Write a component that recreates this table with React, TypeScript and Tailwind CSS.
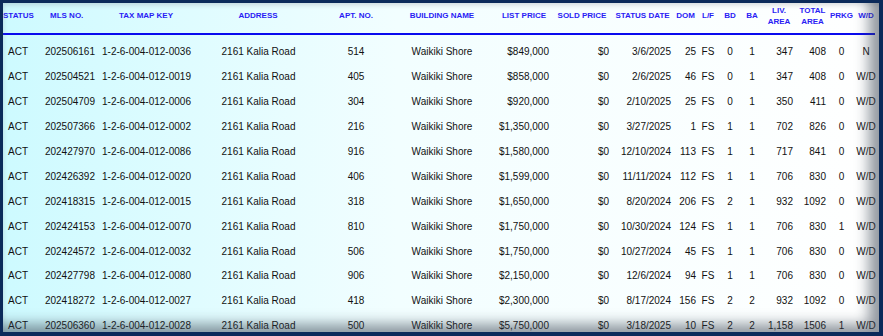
import React from "react";

type Col = {
  key: string;
  label: string[];
  head: string;
  cell: string;
};

const columns: Col[] = [
  { key: "status", label: ["STATUS"], head: "justify-start", cell: "justify-start pl-[5px]" },
  { key: "mls", label: ["MLS NO."], head: "justify-start pl-[12px]", cell: "justify-end pr-[4px]" },
  { key: "tmk", label: ["TAX MAP KEY"], head: "justify-center pr-[3px]", cell: "justify-start pl-[3px]" },
  { key: "address", label: ["ADDRESS"], head: "justify-center", cell: "justify-center pl-[1px]" },
  { key: "apt", label: ["APT. NO."], head: "justify-center", cell: "justify-center" },
  { key: "building", label: ["BUILDING NAME"], head: "justify-center", cell: "justify-center" },
  { key: "list", label: ["LIST PRICE"], head: "justify-center pl-[4px]", cell: "justify-end pr-[3px]" },
  { key: "sold", label: ["SOLD PRICE"], head: "justify-center", cell: "justify-end pr-[3px]" },
  { key: "date", label: ["STATUS DATE"], head: "justify-center", cell: "justify-end pr-[2px]" },
  { key: "dom", label: ["DOM"], head: "justify-center", cell: "justify-end pr-[2px]" },
  { key: "lf", label: ["L/F"], head: "justify-center", cell: "justify-center" },
  { key: "bd", label: ["BD"], head: "justify-center", cell: "justify-center" },
  { key: "ba", label: ["BA"], head: "justify-center", cell: "justify-center" },
  { key: "liv", label: ["LIV.", "AREA"], head: "justify-center", cell: "justify-end pr-[3px]" },
  { key: "total", label: ["TOTAL", "AREA"], head: "justify-center", cell: "justify-end pr-[3px]" },
  { key: "prkg", label: ["PRKG"], head: "justify-center", cell: "justify-center" },
  { key: "wd", label: ["W/D"], head: "justify-center", cell: "justify-center" },
];

// mls, tmk suffix, apt, list, date, dom, bd, ba, liv, total, prkg, wd
const raw: [string, string, string, string, string, string, string, string, string, string, string, string][] = [
  ["202506161", "0036", "514", "$849,000", "3/6/2025", "25", "0", "1", "347", "408", "0", "N"],
  ["202504521", "0019", "405", "$858,000", "2/6/2025", "46", "0", "1", "347", "408", "0", "W/D"],
  ["202504709", "0006", "304", "$920,000", "2/10/2025", "25", "0", "1", "350", "411", "0", "W/D"],
  ["202507366", "0002", "216", "$1,350,000", "3/27/2025", "1", "1", "1", "702", "826", "0", "W/D"],
  ["202427970", "0086", "916", "$1,580,000", "12/10/2024", "113", "1", "1", "717", "841", "0", "W/D"],
  ["202426392", "0020", "406", "$1,599,000", "11/11/2024", "112", "1", "1", "706", "830", "0", "W/D"],
  ["202418315", "0015", "318", "$1,650,000", "8/20/2024", "206", "2", "1", "932", "1092", "0", "W/D"],
  ["202424153", "0070", "810", "$1,750,000", "10/30/2024", "124", "1", "1", "706", "830", "1", "W/D"],
  ["202424572", "0032", "506", "$1,750,000", "10/27/2024", "45", "1", "1", "706", "830", "0", "W/D"],
  ["202427798", "0080", "906", "$2,150,000", "12/6/2024", "94", "1", "1", "706", "830", "0", "W/D"],
  ["202418272", "0027", "418", "$2,300,000", "8/17/2024", "156", "2", "2", "932", "1092", "0", "W/D"],
  ["202506360", "0028", "500", "$5,750,000", "3/18/2025", "10", "2", "2", "1,158", "1506", "1", "W/D"],
];

const rows = raw.map((r) => [
  "ACT",
  r[0],
  `1-2-6-004-012-${r[1]}`,
  "2161 Kalia Road",
  r[2],
  "Waikiki Shore",
  r[3],
  "$0",
  r[4],
  r[5],
  "FS",
  r[6],
  r[7],
  r[8],
  r[9],
  r[10],
  r[11],
]);

const gridCols =
  "grid grid-cols-[35px_61px_97px_124px_72px_100px_60px_60px_61px_25px_20px_24px_20px_34px_33px_25px_24px]";

export default function App() {
  return (
    <div className="w-[883px] h-[336px] bg-[#0b2a5a] pt-[3px] pl-[3px] pr-[4px] pb-[4px] font-['Liberation_Sans',Arial,sans-serif]">
      <div className="relative w-full h-full overflow-hidden bg-gradient-to-r from-[#cdfaff] via-[#f2feff] via-45% to-white">
        {/* bevel shading along the right and bottom edges */}
        <div className="pointer-events-none absolute inset-0 shadow-[inset_-18px_-16px_14px_-8px_rgba(55,65,80,0.55),inset_2px_4px_5px_-2px_rgba(120,130,140,0.3)]" />

        <div className={`${gridCols} h-[27px] pb-[3px] mr-[4px] border-b-2 border-[#0a0aee] box-content`}>
          {columns.map((c) => (
            <div
              key={c.key}
              className={`flex items-center whitespace-nowrap text-[8px] font-bold leading-[10.5px] text-[#2a1cf5] ${c.head}`}
            >
              <div className="text-center">
                {c.label.map((l) => (
                  <div key={l}>{l}</div>
                ))}
              </div>
            </div>
          ))}
        </div>

        <div className="pt-[4.5px]">
          {rows.map((r, i) => (
            <div key={i} className={`${gridCols} h-[24.9px]`}>
              {r.map((v, j) => (
                <div
                  key={j}
                  className={`flex items-center whitespace-nowrap text-[10px] text-[#111] ${columns[j].cell}`}
                >
                  {v}
                </div>
              ))}
            </div>
          ))}
        </div>
      </div>
    </div>
  );
}
